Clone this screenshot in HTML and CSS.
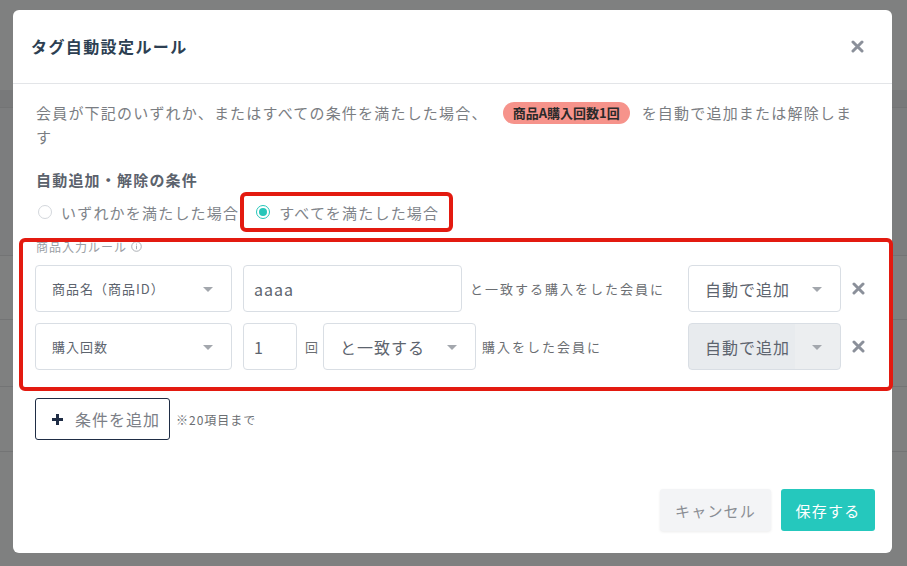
FILE: index.html
```html
<!DOCTYPE html>
<html lang="ja">
<head>
    <meta charset="UTF-8">
    <meta name="viewport" content="width=device-width, initial-scale=1.0">
    <title>タグ自動設定ルール</title>
    <link rel="stylesheet" href="styles.css">
</head>
<body>
    <div class="page">
        <div class="page-row row-a"></div>
        <div class="page-row row-b"></div>
        <div class="page-row row-c"></div>
        <div class="page-row row-d"></div>
        <div class="page-row row-e"></div>
        <div class="page-row row-f"></div>
        <div class="page-row row-g"></div>
    </div>

    <div class="overlay">
        <div class="modal">
            <div class="modal-header">
                <h2 class="modal-title">タグ自動設定ルール</h2>
                <button class="close-btn" type="button" aria-label="閉じる">
                    <svg width="13" height="13" viewBox="0 0 13 13"><path d="M2 2 L11 11 M11 2 L2 11" stroke="#8b909a" stroke-width="3" stroke-linecap="round"/></svg>
                </button>
            </div>

            <div class="modal-body">
                <p class="desc">会員が下記のいずれか、またはすべての条件を満たした場合、<span class="tag">商品A購入回数1回</span>を自動で追加または解除しま<br>す</p>

                <h3 class="section-title">自動追加・解除の条件</h3>
                <div class="radio-group">
                    <label class="radio"><span class="radio-mark"></span>いずれかを満たした場合</label>
                    <label class="radio checked marked"><span class="radio-mark"></span>すべてを満たした場合</label>
                </div>

                <div class="rules marked">
                    <div class="rules-label">商品入力ルール
                        <svg width="11" height="11" viewBox="0 0 11 11"><circle cx="5.5" cy="5.5" r="4.8" fill="none" stroke="#a4a8ae" stroke-width="0.9"/><path d="M5.5 4.6 V8.2" stroke="#a4a8ae" stroke-width="1"/><circle cx="5.5" cy="3.1" r="0.6" fill="#a4a8ae"/></svg>
                    </div>

                    <div class="rule-row">
                        <div class="select w-field">商品名（商品ID）<span class="caret"></span></div>
                        <div class="text-input w-value">aaaa</div>
                        <span class="rule-text">と一致する購入をした会員に</span>
                        <div class="select w-action big">自動で追加<span class="caret"></span></div>
                        <button class="remove-btn" type="button">
                            <svg width="13" height="13" viewBox="0 0 13 13"><path d="M2 2 L11 11 M11 2 L2 11" stroke="#8b909a" stroke-width="3" stroke-linecap="round"/></svg>
                        </button>
                    </div>

                    <div class="rule-row">
                        <div class="select w-field">購入回数<span class="caret"></span></div>
                        <div class="text-input w-count">1</div>
                        <span class="unit">回</span>
                        <div class="select w-match big">と一致する<span class="caret"></span></div>
                        <span class="rule-text short">購入をした会員に</span>
                        <div class="select w-action big disabled">自動で追加<span class="caret"></span></div>
                        <button class="remove-btn" type="button">
                            <svg width="13" height="13" viewBox="0 0 13 13"><path d="M2 2 L11 11 M11 2 L2 11" stroke="#8b909a" stroke-width="3" stroke-linecap="round"/></svg>
                        </button>
                    </div>
                </div>

                <div class="add-row">
                    <button class="add-btn" type="button">
                        <svg width="13" height="13" viewBox="0 0 13 13"><path d="M6.5 1 V12 M1 6.5 H12" stroke="#1f2d45" stroke-width="3"/></svg>
                        条件を追加
                    </button>
                    <span class="limit">※20項目まで</span>
                </div>
            </div>

            <div class="modal-footer">
                <button class="btn btn-cancel" type="button">キャンセル</button>
                <button class="btn btn-save" type="button">保存する</button>
            </div>
        </div>
    </div>
</body>
</html>
```

FILE: styles.css
```css
* {
    box-sizing: border-box;
}

body {
    margin: 0;
    font-family: "Noto Sans CJK JP", "Noto Sans", sans-serif;
    background: #7f8080;
    overflow: hidden;
}

/* page behind the overlay */
.page-row {
    border-bottom: 1px solid #737475;
}

.row-a { height: 90px; border-bottom: none; }
.row-b { height: 18px; background: #78797a; }
.row-c { height: 148px; background: #7c7d7e; }
.row-d { height: 64px; }
.row-e { height: 67px; }
.row-f { height: 65px; }
.row-g { height: 100px; border-bottom: none; }

.overlay {
    position: fixed;
    top: 0;
    left: 0;
    right: 0;
    bottom: 0;
}

.modal {
    width: 879px;
    margin: 10px 0 0 13px;
    background: #fff;
    border-radius: 6px;
}

.modal-header {
    display: flex;
    align-items: center;
    justify-content: space-between;
    padding: 24px 28px 25px 18px;
    border-bottom: 1px solid #e3e5e8;
}

.modal-title {
    margin: 0;
    font-size: 16px;
    line-height: 24px;
    font-weight: bold;
    letter-spacing: 1.4px;
    color: #2d3f52;
}

.close-btn,
.remove-btn {
    border: none;
    background: none;
    padding: 0;
    display: flex;
    align-items: center;
    justify-content: center;
    cursor: pointer;
}

.modal-body {
    padding: 17px 17px 0 22px;
}

.desc {
    margin: 0 10px 0 1px;
    font-size: 15px;
    line-height: 24px;
    letter-spacing: 1.2px;
    color: #7a7d82;
}

.tag {
    display: inline-block;
    height: 22px;
    line-height: 22px;
    padding: 0 10px;
    margin: 1px 12px 1px 15px;
    border-radius: 12px;
    background: #f6938b;
    color: #2a2a2a;
    font-size: 13px;
    font-weight: bold;
    letter-spacing: 0;
    vertical-align: top;
}

.section-title {
    margin: 19px 0 0 1px;
    font-size: 15px;
    line-height: 24px;
    font-weight: bold;
    letter-spacing: 1.2px;
    color: #5b626c;
}

.radio-group {
    display: flex;
    height: 40px;
    align-items: stretch;
}

.radio {
    position: relative;
    display: flex;
    align-items: center;
    font-size: 15px;
    letter-spacing: 1.2px;
    color: #80848a;
}

.radio:first-child {
    margin-left: 3px;
}

.radio + .radio {
    margin-left: 17px;
}

.radio-mark {
    width: 14px;
    height: 14px;
    margin-right: 9px;
    border: 1px solid #d3d7dc;
    border-radius: 50%;
    display: flex;
    align-items: center;
    justify-content: center;
}

.radio.checked .radio-mark {
    border: 1.5px solid #26c6b9;
}

.radio.checked .radio-mark::before {
    content: "";
    width: 8px;
    height: 8px;
    border-radius: 50%;
    background: #26c6b9;
}

/* red annotation boxes drawn over the content */
.marked {
    position: relative;
}

.marked::after {
    content: "";
    position: absolute;
    border: 4px solid #e31a10;
    border-radius: 6px;
    pointer-events: none;
}

.radio.marked::after {
    top: 0;
    bottom: 0;
    left: -16px;
    right: -14px;
}

.rules.marked::after {
    top: -2px;
    bottom: -21px;
    left: -16px;
    right: -18px;
}

.rules {
    margin-top: 8px;
}

.rules-label {
    display: flex;
    align-items: center;
    gap: 4px;
    height: 13px;
    margin: 0 0 12px 1px;
    font-size: 12px;
    line-height: 13px;
    letter-spacing: 1px;
    color: #9a9ea4;
}

.rule-row {
    display: flex;
    align-items: center;
    height: 47px;
}

.rule-row + .rule-row {
    margin-top: 11px;
}

.select,
.text-input {
    position: relative;
    height: 47px;
    display: flex;
    align-items: center;
    border: 1px solid #d9dee4;
    border-radius: 4px;
    background: #fff;
    color: #5d646e;
    font-size: 13px;
    letter-spacing: 1px;
}

.select {
    padding-left: 16px;
}

.select.big {
    font-size: 16px;
    padding-left: 16px;
}

.caret {
    position: absolute;
    right: 18px;
    top: 21px;
    width: 0;
    height: 0;
    border-left: 5px solid transparent;
    border-right: 5px solid transparent;
    border-top: 5px solid #a3a7ad;
}

.select.disabled {
    background: linear-gradient(to right, #e8ebee 0, #e8ebee 70%, #eceef0 70%);
}

.text-input {
    padding-left: 10px;
    font-size: 16px;
    margin-left: 11px;
}

.w-field { width: 197px; }
.w-value { width: 219px; }
.w-count { width: 54px; }
.w-match { width: 153px; }
.w-action { width: 153px; margin-left: auto; }

.rule-text {
    margin-left: 8px;
    font-size: 13px;
    letter-spacing: 2px;
    color: #6b6e72;
}

.rule-text.short {
    margin-left: 6px;
}

.unit {
    margin: 0 5px 0 8px;
    font-size: 13px;
    color: #6b6e72;
}

.remove-btn {
    width: 34px;
    height: 47px;
}

.add-row {
    display: flex;
    align-items: center;
    margin-top: 28px;
}

.add-btn {
    display: flex;
    align-items: center;
    gap: 11px;
    height: 42px;
    width: 135px;
    padding: 0 0 0 15px;
    border: 1px solid #1f2d45;
    border-radius: 3px;
    background: #fff;
    font-family: inherit;
    font-size: 16px;
    letter-spacing: 1px;
    color: #7c8087;
}

.limit {
    margin-left: 6px;
    font-size: 12px;
    letter-spacing: 1px;
    color: #6b6e72;
}

.modal-footer {
    display: flex;
    justify-content: flex-end;
    gap: 10px;
    padding: 49px 17px 22px 0;
}

.btn {
    height: 42px;
    border: none;
    border-radius: 3px;
    font-family: inherit;
    font-size: 15px;
    letter-spacing: 1.2px;
    cursor: pointer;
}

.btn-cancel {
    width: 111px;
    background: #f3f4f6;
    color: #8a8e94;
    box-shadow: 0 1px 3px rgba(0, 0, 0, 0.08);
}

.btn-save {
    width: 94px;
    background: #25c8bd;
    color: #fff;
}
```
